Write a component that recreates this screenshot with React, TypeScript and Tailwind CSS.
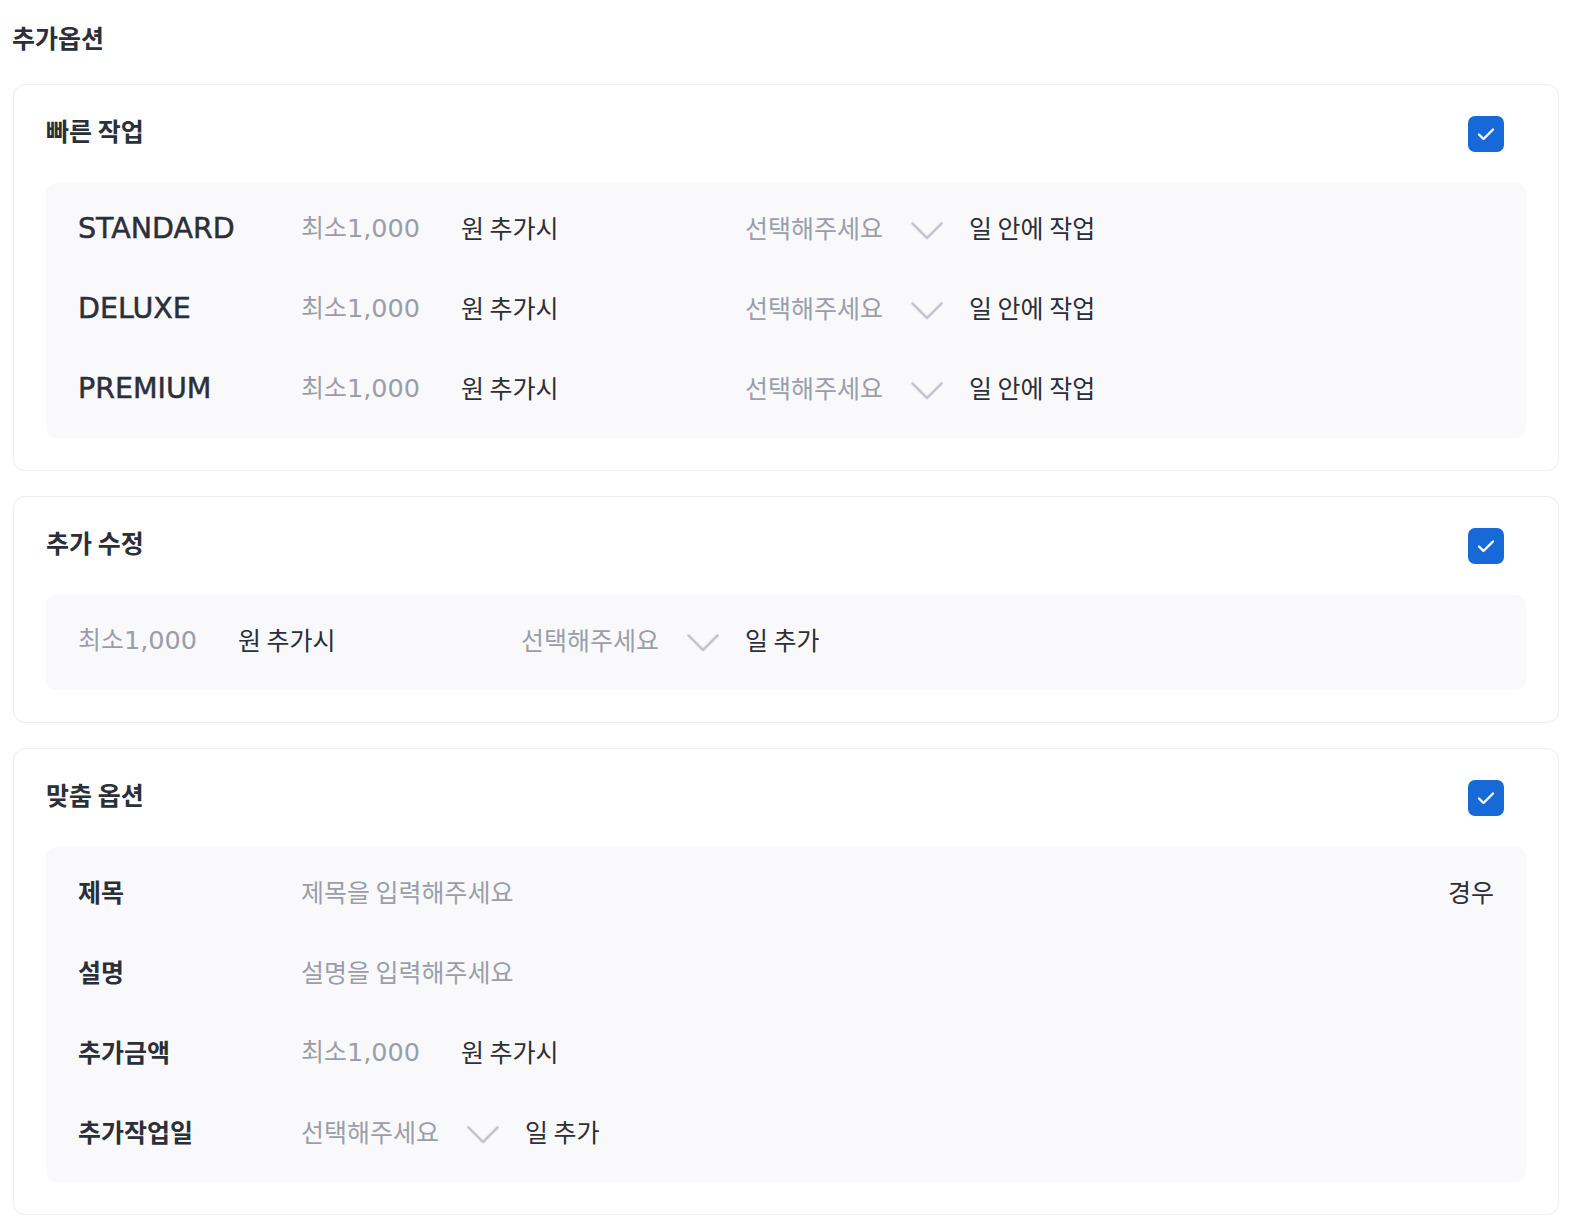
import React from 'react';

const KR = '"Noto Sans CJK KR", "Noto Sans", sans-serif';
const LATIN = '"DejaVu Sans", "Noto Sans CJK KR", sans-serif';

const Latin = ({ children, className = '' }: { children: React.ReactNode; className?: string }) => (
  <span className={className} style={{ fontFamily: LATIN }}>
    {children}
  </span>
);

const Chevron = () => (
  <svg width="32" height="18" viewBox="0 0 32 18" fill="none" className="mt-[7px]">
    <polyline points="1.5,1.5 16,16 30.5,1.5" stroke="#c4c6cf" strokeWidth="2.6" strokeLinecap="round" strokeLinejoin="round" />
  </svg>
);

const Checkbox = () => (
  <div className="w-9 h-9 rounded-[7px] bg-[#1769d8] flex items-center justify-center mr-[22px]">
    <svg width="18" height="14" viewBox="0 0 18 14" fill="none">
      <polyline points="2,7.5 6.5,12 16,2.5" stroke="#ffffff" strokeWidth="2.4" strokeLinecap="round" strokeLinejoin="round" />
    </svg>
  </div>
);

const PriceInput = () => (
  <div className="w-[160px] flex items-baseline text-[#9b9ea9]">
    <span>최소</span>
    <Latin className="text-[25.5px]">1,000</Latin>
  </div>
);

const DaySelect = () => (
  <div className="w-[200px] flex items-center justify-between pr-[2px]">
    <span className="text-[#9b9ea9]">선택해주세요</span>
    <Chevron />
  </div>
);

interface SectionProps {
  title: string;
  children: React.ReactNode;
}

const Section = ({ title, children }: SectionProps) => (
  <div className="border border-[#ededf3] rounded-[12px] bg-white px-8 pt-[31px] pb-8">
    <div className="flex items-center justify-between h-9 mb-[31px]">
      <span className="font-semibold text-[#2b2f38] mb-[6px]">{title}</span>
      <Checkbox />
    </div>
    <div className="bg-[#f9f9fb] rounded-[10px] px-8 py-6 flex flex-col gap-[33px]">{children}</div>
  </div>
);

const Row = ({ children }: { children: React.ReactNode }) => (
  <div className="h-[47px] pb-[6px] flex items-center">{children}</div>
);

const tiers = ['STANDARD', 'DELUXE', 'PREMIUM'];

export default function App() {
  return (
    <div className="min-h-screen bg-white pl-[13px] pr-[23px] pt-[21px] pb-6 text-[25px] text-[#2b2f38]" style={{ fontFamily: KR }}>
      <div className="h-8 leading-8 font-semibold -ml-[1px] mb-[31px]">추가옵션</div>

      <div className="flex flex-col gap-[25px]">
        <Section title="빠른 작업">
          {tiers.map((tier) => (
            <Row key={tier}>
              <div className="w-[223px] mt-[4px]">
                <Latin className="text-[28.5px] text-[#2b2f38] [-webkit-text-stroke:0.5px_#2b2f38]">{tier}</Latin>
              </div>
              <PriceInput />
              <span className="w-[284px]">원 추가시</span>
              <DaySelect />
              <span className="ml-6">일 안에 작업</span>
            </Row>
          ))}
        </Section>

        <Section title="추가 수정">
          <Row>
            <PriceInput />
            <span className="w-[283px]">원 추가시</span>
            <DaySelect />
            <span className="ml-6">일 추가</span>
          </Row>
        </Section>

        <Section title="맞춤 옵션">
          <Row>
            <span className="w-[223px] font-semibold">제목</span>
            <span className="text-[#9b9ea9]">제목을 입력해주세요</span>
            <span className="ml-auto">경우</span>
          </Row>
          <Row>
            <span className="w-[223px] font-semibold">설명</span>
            <span className="text-[#9b9ea9]">설명을 입력해주세요</span>
          </Row>
          <Row>
            <span className="w-[223px] font-semibold">추가금액</span>
            <PriceInput />
            <span>원 추가시</span>
          </Row>
          <Row>
            <span className="w-[223px] font-semibold">추가작업일</span>
            <DaySelect />
            <span className="ml-6">일 추가</span>
          </Row>
        </Section>
      </div>
    </div>
  );
}
